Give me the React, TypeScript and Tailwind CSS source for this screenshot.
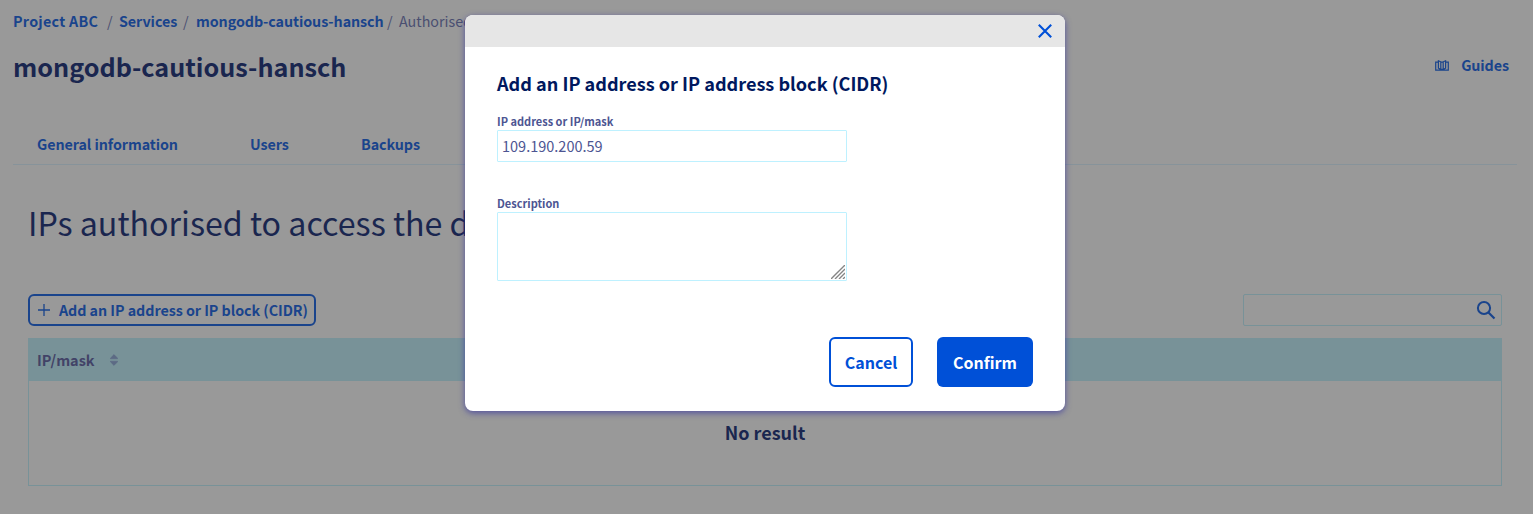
import React from "react";

const tabs = [
  { label: "General information", gap: "mr-[72px]", width: "w-[141px]" },
  { label: "Users", gap: "mr-[72px]", width: "w-[39px]" },
  { label: "Backups", gap: "", width: "w-[60px]" },
];

function PlusIcon() {
  return (
    <svg width="12" height="12" viewBox="0 0 12 12" className="shrink-0" stroke="currentColor" strokeWidth="1.3">
      <path d="M6 0v12M0 6h12" />
    </svg>
  );
}

function SortIcon() {
  return (
    <svg width="8" height="12" viewBox="0 0 8 12" className="shrink-0" fill="#5c6a84" stroke="#5c6a84" strokeWidth=".6" strokeLinejoin="round">
      <path d="M4 .6 7.6 4.2v.5H.4v-.5zM4 11.4.4 7.8v-.5h7.2v.5z" />
    </svg>
  );
}

function GuideIcon() {
  return (
    <svg width="14" height="11" viewBox="0 0 14 11" fill="none" stroke="currentColor" strokeWidth="1.2" className="shrink-0">
      <path d="M3.4 2.2H.7v8h12.6v-8h-2.7M3.4 8.4V.8l2.4 1v7.4M10.6 8.4V.8l-2.4 1v7.4M3.4 8.2 5.8 9.3h2.4l2.4-1.1M5.8 2.2h2.4" />
    </svg>
  );
}

function SearchIcon() {
  return (
    <svg width="20" height="20" viewBox="0 0 20 20" fill="none" stroke="currentColor" strokeWidth="2" className="shrink-0">
      <circle cx="8" cy="8" r="6.1" />
      <path d="m12.5 12.5 6 6" strokeWidth="2.2" />
    </svg>
  );
}

function CloseIcon() {
  return (
    <svg width="14" height="14" viewBox="0 0 14 14" fill="none" stroke="currentColor" strokeWidth="2.1" className="shrink-0">
      <path d="m.8.8 12.4 12.4M13.2.8.8 13.2" />
    </svg>
  );
}

function ServicePage() {
  return (
    <main className="h-full bg-[#999999] text-[#1a448c]">
      <nav className="flex h-[42px] items-center whitespace-nowrap pl-[13px] text-[14.3px] font-bold leading-[20px] tracking-[-0.07px]">
        <a className="w-[94px] tracking-[0.27px]">Project ABC</a>
        <span className="w-[12px] font-normal text-[#4a4f71]">/</span>
        <a className="w-[64px]">Services</a>
        <span className="w-[13px] font-normal text-[#4a4f71]">/</span>
        <a className="w-[191px]">mongodb-cautious-hansch</a>
        <span className="w-[12px] font-normal text-[#4a4f71]">/</span>
        <span className="font-normal tracking-normal text-[#4a4f71]">Authorised IPs</span>
      </nav>
      <header className="flex h-[48px] items-center justify-between pl-[13px] pr-[24px]">
        <h1 className="text-[25.2px] font-bold leading-[36px] text-[#1a264f]">mongodb-cautious-hansch</h1>
        <a className="flex items-center gap-3 pb-[2px] text-[14.3px] font-bold tracking-[-0.07px]">
          <GuideIcon />
          Guides
        </a>
      </header>
      <div className="ml-[13px] mr-[16px] mt-[34px] flex h-[41px] items-center whitespace-nowrap border-b border-[#87939a] pl-6 text-[14.3px] font-bold tracking-[-0.07px]">
        {tabs.map((t) => (
          <a key={t.label} className={`${t.width} ${t.gap}`}>{t.label}</a>
        ))}
      </div>
      <section className="ml-[28px] mr-[31px]">
        <h2 className="mt-[32px] h-[50px] text-[32.2px] leading-[50px] text-[#1a264f]">IPs authorised to access the database</h2>
        <div className="mt-[47px] flex h-[32px] items-center justify-between">
          <button className="flex h-[32px] w-[288px] items-center gap-[9px] rounded-[6px] border-2 border-[#1a448c] pl-2 text-[14.3px] font-bold tracking-[-0.05px]">
            <PlusIcon />
            <span className="whitespace-nowrap">Add an IP address or IP block (CIDR)</span>
          </button>
          <div className="flex h-[32px] w-[259px] items-center justify-end rounded-[2px] border border-[#789298] pr-[5px]">
            <SearchIcon />
          </div>
        </div>
        <div className="mt-[12px] h-[148px] border border-[#789298]">
          <div className="flex h-[42px] items-center bg-[#789298] pl-2 text-[14.5px] font-bold text-[#424367]">
            <span className="w-[73px]">IP/mask</span>
            <SortIcon />
          </div>
          <p className="h-[104px] text-center text-[18px] font-bold leading-[103px] text-[#1a264f]">No result</p>
        </div>
      </section>
    </main>
  );
}

function AddIpDialog() {
  return (
    <div role="dialog" className="flex h-[396px] w-[600px] flex-col overflow-hidden rounded-[8px] bg-white shadow-[0_2px_6px_rgba(51,50,160,0.7)]">
      <div className="flex h-[32px] shrink-0 items-center justify-end bg-[#e6e6e6] pr-[13px] text-[#0050d7]">
        <CloseIcon />
      </div>
      <div className="flex flex-col px-8 pt-[21px]">
        <h3 className="h-[30px] text-[18.1px] font-bold leading-[30px] text-[#00185e]">Add an IP address or IP address block (CIDR)</h3>
        <label className="mt-[15px] h-[17px] text-[11px] font-bold leading-[16px] text-[#4d5592]">IP address or IP/mask</label>
        <div className="h-[32px] w-[350px] rounded-[1px] border border-[#bef1ff] pl-[4px] text-[14.5px] leading-[30px] text-[#4d5592]">109.190.200.59</div>
        <label className="mt-[33px] h-[17px] text-[11px] font-bold leading-[16px] text-[#4d5592]">Description</label>
        <div className="flex h-[69px] w-[350px] items-end justify-end rounded-[1px] border border-[#bef1ff] p-px">
          <svg width="14" height="14" viewBox="0 0 14 14" stroke="#858585" strokeWidth="1.4">
            <path d="M0 14 14 0M4 14 14 4M8 14l6-6M12 14l2-2" />
          </svg>
        </div>
      </div>
      <div className="mt-[56px] flex justify-end gap-6 pr-8 text-[16px] font-bold">
        <button className="h-[50px] w-[84px] rounded-[6px] border-2 border-[#0050d7] text-[#0050d7]">Cancel</button>
        <button className="h-[50px] w-[96px] rounded-[6px] bg-[#0050d7] text-white">Confirm</button>
      </div>
    </div>
  );
}

export default function App() {
  return (
    <div className="relative h-[514px] w-full overflow-hidden font-['Noto_Sans_CJK_SC',sans-serif]">
      <ServicePage />
      <div className="absolute inset-0 flex items-start justify-center pr-[3px] pt-[15px]">
        <AddIpDialog />
      </div>
    </div>
  );
}
